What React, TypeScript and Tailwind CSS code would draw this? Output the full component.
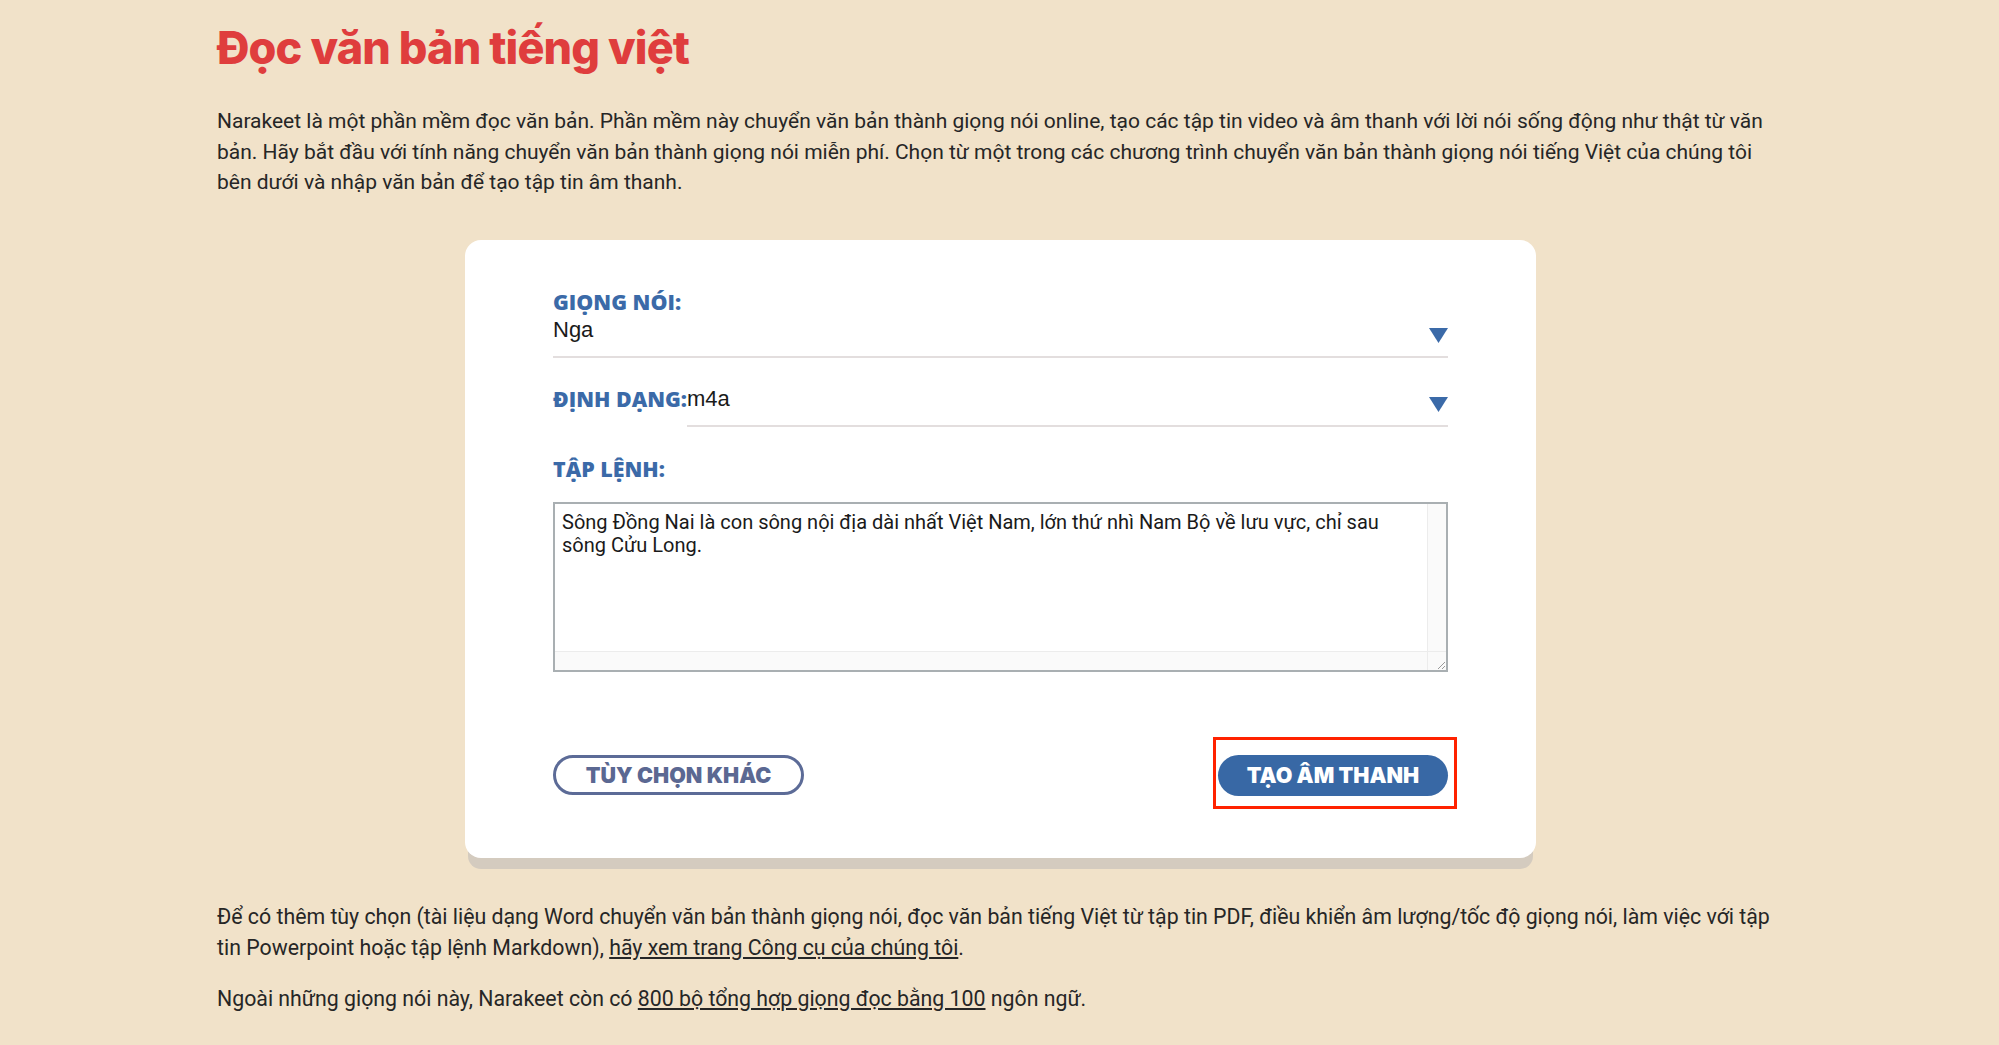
import React from "react";

const Arrow = () => (
  <svg width="19" height="15" viewBox="0 0 19 15" className="shrink-0 mt-[10px]">
    <polygon points="0,0 19,0 9.5,15" fill="#3b6aa8" />
  </svg>
);

const App = () => {
  return (
    <div className="min-h-screen w-full bg-[#f1e2c9] font-['Roboto',sans-serif] text-[#262626]">
      <div className="w-[1565px] mx-auto pt-[20px] pb-[40px]">
        <h1 className="font-['Inter',sans-serif] font-extrabold text-[45px] leading-[56px] tracking-[-0.02em] text-[#df3d3d]">
          Đọc văn bản tiếng việt
        </h1>

        <p className="mt-[30px] text-[21px] leading-[30.5px]">
          Narakeet là một phần mềm đọc văn bản. Phần mềm này chuyển văn bản thành giọng nói online, tạo các tập tin video và âm thanh với lời nói sống động như thật từ văn bản. Hãy bắt đầu với tính năng chuyển văn bản thành giọng nói miễn phí. Chọn từ một trong các chương trình chuyển văn bản thành giọng nói tiếng Việt của chúng tôi bên dưới và nhập văn bản để tạo tập tin âm thanh.
        </p>

        {/* card */}
        <div className="mt-[42px] ml-[248px] w-[1071px] bg-white rounded-[16px] px-[88px] pt-[50px] pb-[62px] shadow-[0_14px_0_-3px_#d4cbbf]">
          <div className="font-['Open_Sans',sans-serif] font-extrabold text-[21.4px] leading-[24px] text-[#3b6aa8]">
            GIỌNG NÓI:
          </div>
          <div className="mt-[4px] flex items-start justify-between border-b-2 border-[#e3dede] pb-[13px]">
            <span className="font-['Liberation_Sans',sans-serif] text-[22px] leading-[24px] text-[#1a1a1a]">Nga</span>
            <Arrow />
          </div>

          <div className="mt-[29px] flex items-start">
            <span className="font-['Open_Sans',sans-serif] font-extrabold text-[21.4px] leading-[24px] text-[#3b6aa8]">
              ĐỊNH DẠNG:
            </span>
            <div className="flex-1 flex items-start justify-between border-b-2 border-[#e3dede] pb-[13px]">
              <span className="font-['Liberation_Sans',sans-serif] text-[22px] leading-[24px] text-[#1a1a1a]">m4a</span>
              <Arrow />
            </div>
          </div>

          <div className="mt-[30px] font-['Open_Sans',sans-serif] font-extrabold text-[21.4px] leading-[24px] text-[#3b6aa8]">
            TẬP LỆNH:
          </div>

          <div className="mt-[21px] h-[170px] border-2 border-[#a9afb2] flex flex-col">
            <div className="flex flex-1">
              <textarea
                className="flex-1 resize-none outline-none pl-[7px] pt-[7px] pr-[30px] font-['Roboto',sans-serif] text-[20px] leading-[23px] text-[#1a1a1a]"
                defaultValue="Sông Đồng Nai là con sông nội địa dài nhất Việt Nam, lớn thứ nhì Nam Bộ về lưu vực, chỉ sau sông Cửu Long."
              />
              <div className="w-[19px] border-l border-[#ececec] bg-[#fafafa]" />
            </div>
            <div className="h-[19px] flex border-t border-[#ececec] bg-[#fafafa]">
              <div className="flex-1" />
              <div className="w-[19px] border-l border-[#ececec] flex items-end justify-end">
                <svg width="10" height="10" viewBox="0 0 10 10">
                  <line x1="9" y1="2" x2="2" y2="9" stroke="#9a9a9a" strokeWidth="1" />
                  <line x1="9" y1="6" x2="6" y2="9" stroke="#9a9a9a" strokeWidth="1" />
                </svg>
              </div>
            </div>
          </div>

          <div className="mt-[83px] flex items-center justify-between">
            <button
              type="button"
              className="w-[251px] h-[40px] rounded-full border-[3px] border-[#5c6b97] font-['Inter',sans-serif] font-black text-[21.5px] text-[#5b6892]"
            >
              TÙY CHỌN KHÁC
            </button>
            <div className="relative">
              <button
                type="button"
                className="w-[230px] h-[41px] rounded-full bg-[#3868a5] font-['Inter',sans-serif] font-black text-[21.5px] text-white"
              >
                TẠO ÂM THANH
              </button>
              <div className="absolute -top-[18px] -bottom-[13px] -left-[5px] -right-[9px] border-[3px] border-[#ff2200] pointer-events-none" />
            </div>
          </div>
        </div>

        <p className="mt-[43px] text-[21.3px] leading-[31px]">
          Để có thêm tùy chọn (tài liệu dạng Word chuyển văn bản thành giọng nói, đọc văn bản tiếng Việt từ tập tin PDF, điều khiển âm lượng/tốc độ giọng nói, làm việc với tập tin Powerpoint hoặc tập lệnh Markdown),{" "}
          <a href="#" className="underline">hãy xem trang Công cụ của chúng tôi</a>.
        </p>
        <p className="mt-[20px] text-[21.3px] leading-[31px]">
          Ngoài những giọng nói này, Narakeet còn có{" "}
          <a href="#" className="underline">800 bộ tổng hợp giọng đọc bằng 100</a> ngôn ngữ.
        </p>
      </div>
    </div>
  );
};

export default App;
